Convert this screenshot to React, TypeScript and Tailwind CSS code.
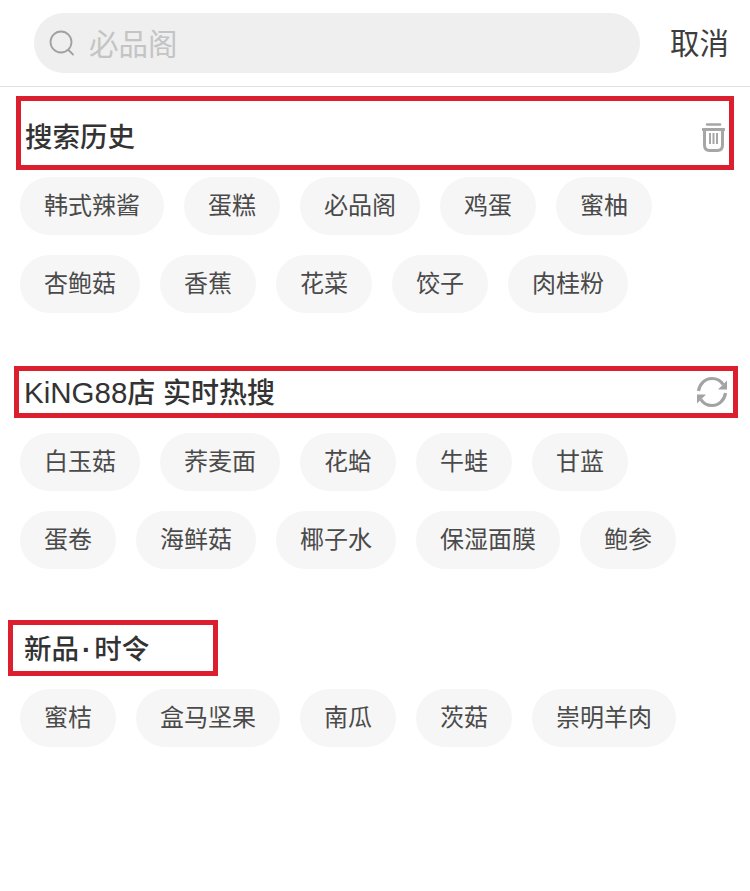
const FONT = "font-['Liberation_Sans','Noto_Sans_CJK_SC',sans-serif]"

const HISTORY = ['韩式辣酱', '蛋糕', '必品阁', '鸡蛋', '蜜柚', '杏鲍菇', '香蕉', '花菜', '饺子', '肉桂粉']
const HOT = ['白玉菇', '荞麦面', '花蛤', '牛蛙', '甘蓝', '蛋卷', '海鲜菇', '椰子水', '保湿面膜', '鲍参']
const NEW_ITEMS = ['蜜桔', '盒马坚果', '南瓜', '茨菇', '崇明羊肉']

function TagList({ tags }: { tags: string[] }) {
  return (
    <ul className="flex w-[700px] flex-wrap gap-5 pl-5">
      {tags.map((tag) => (
        <li
          key={tag}
          className="flex h-[58px] items-center rounded-full bg-[#f6f6f6] px-6 text-[24px] leading-none text-[#4a4a4a]"
        >
          {tag}
        </li>
      ))}
    </ul>
  )
}

function SearchIcon() {
  return (
    <svg width="26" height="26" viewBox="0 0 26 26" fill="none" aria-hidden="true">
      <circle cx="12" cy="12" r="10.500" stroke="#a0a0a0" strokeWidth="1.800" />
      <path d="M19.500 20l4.500 4.500" stroke="#a0a0a0" strokeWidth="1.800" strokeLinecap="round" />
    </svg>
  )
}

function TrashIcon() {
  return (
    <svg width="23" height="29" viewBox="0 0 23 29" fill="none" aria-hidden="true">
      <path d="M5 1.500h13" stroke="#a6a6a6" strokeWidth="2.500" strokeLinecap="round" />
      <path d="M1 6.500h21" stroke="#a6a6a6" strokeWidth="3" strokeLinecap="round" />
      <path d="M2.500 8v14c0 3.500 2 5.500 5 5.500h8c3 0 5-2 5-5.500V8" stroke="#a6a6a6" strokeWidth="3" />
      <path d="M8 10v11M11.500 10v11M15 10v11" stroke="#a6a6a6" strokeWidth="2" />
    </svg>
  )
}

function RefreshIcon() {
  return (
    <svg width="32" height="32" viewBox="0 0 32 32" fill="none" aria-hidden="true">
      <path d="M2.500 15C3.500 8 9 2.500 16 2.500c5 0 9 2.500 11 6" stroke="#a3a3a3" strokeWidth="3.200" />
      <path d="M29.500 17c-1 7-6.500 12.500-13.500 12.500-5 0-9-2.500-11-6" stroke="#a3a3a3" strokeWidth="3.200" />
      <path d="M31 4.500v9h-9z" fill="#a3a3a3" />
      <path d="M1 27.500v-9h9z" fill="#a3a3a3" />
    </svg>
  )
}

export default function App() {
  return (
    <div className={`h-[891px] w-[750px] overflow-hidden bg-white ${FONT}`}>
      <header className="flex h-[87px] items-start border-b border-[#e2e2e2] pl-[34px] pt-[13px]">
        <div className="flex h-[60px] w-[606px] items-center rounded-full bg-[#efefef] pl-[15px]">
          <SearchIcon />
          <span className="ml-[14px] mt-[3px] text-[29.500px] leading-none text-[#c4c4c4]">必品阁</span>
        </div>
        <button className="ml-[30px] mt-[16px] text-[29.500px] leading-none text-[#3d3d3d]">取消</button>
      </header>

      <section>
        <div className="ml-4 mt-[9px] flex h-[74px] w-[718px] items-center justify-between border-[5px] border-[#dc1f2e] pl-[4px] pr-[4px]">
          <h2 className="mt-[9px] text-[27.500px] font-medium leading-none text-[#333333]">搜索历史</h2>
          <span className="mt-[8px] flex"><TrashIcon /></span>
        </div>
        <div className="mt-[7px]"><TagList tags={HISTORY} /></div>
      </section>

      <section>
        <div className="ml-[14px] mt-[53px] flex h-[52px] w-[724px] items-center justify-between border-[5px] border-[#dc1f2e] pl-[5px] pr-[5px]">
          <h2 className="mt-[2px] text-[28px] font-medium leading-none text-[#333333]">
            <span className="text-[29.500px] font-normal">KiNG88</span>店 实时热搜
          </h2>
          <RefreshIcon />
        </div>
        <div className="mt-[15px]"><TagList tags={HOT} /></div>
      </section>

      <section>
        <div className="ml-2 mt-[51px] flex h-[56px] w-[210px] items-center border-[5px] border-[#dc1f2e] pl-[11px]">
          <h2 className="mt-[3px] text-[27.500px] font-medium leading-none text-[#333333]">
            新品<span className="mx-[3px] font-bold">·</span>时令
          </h2>
        </div>
        <div className="mt-[13px]"><TagList tags={NEW_ITEMS} /></div>
      </section>
    </div>
  )
}
